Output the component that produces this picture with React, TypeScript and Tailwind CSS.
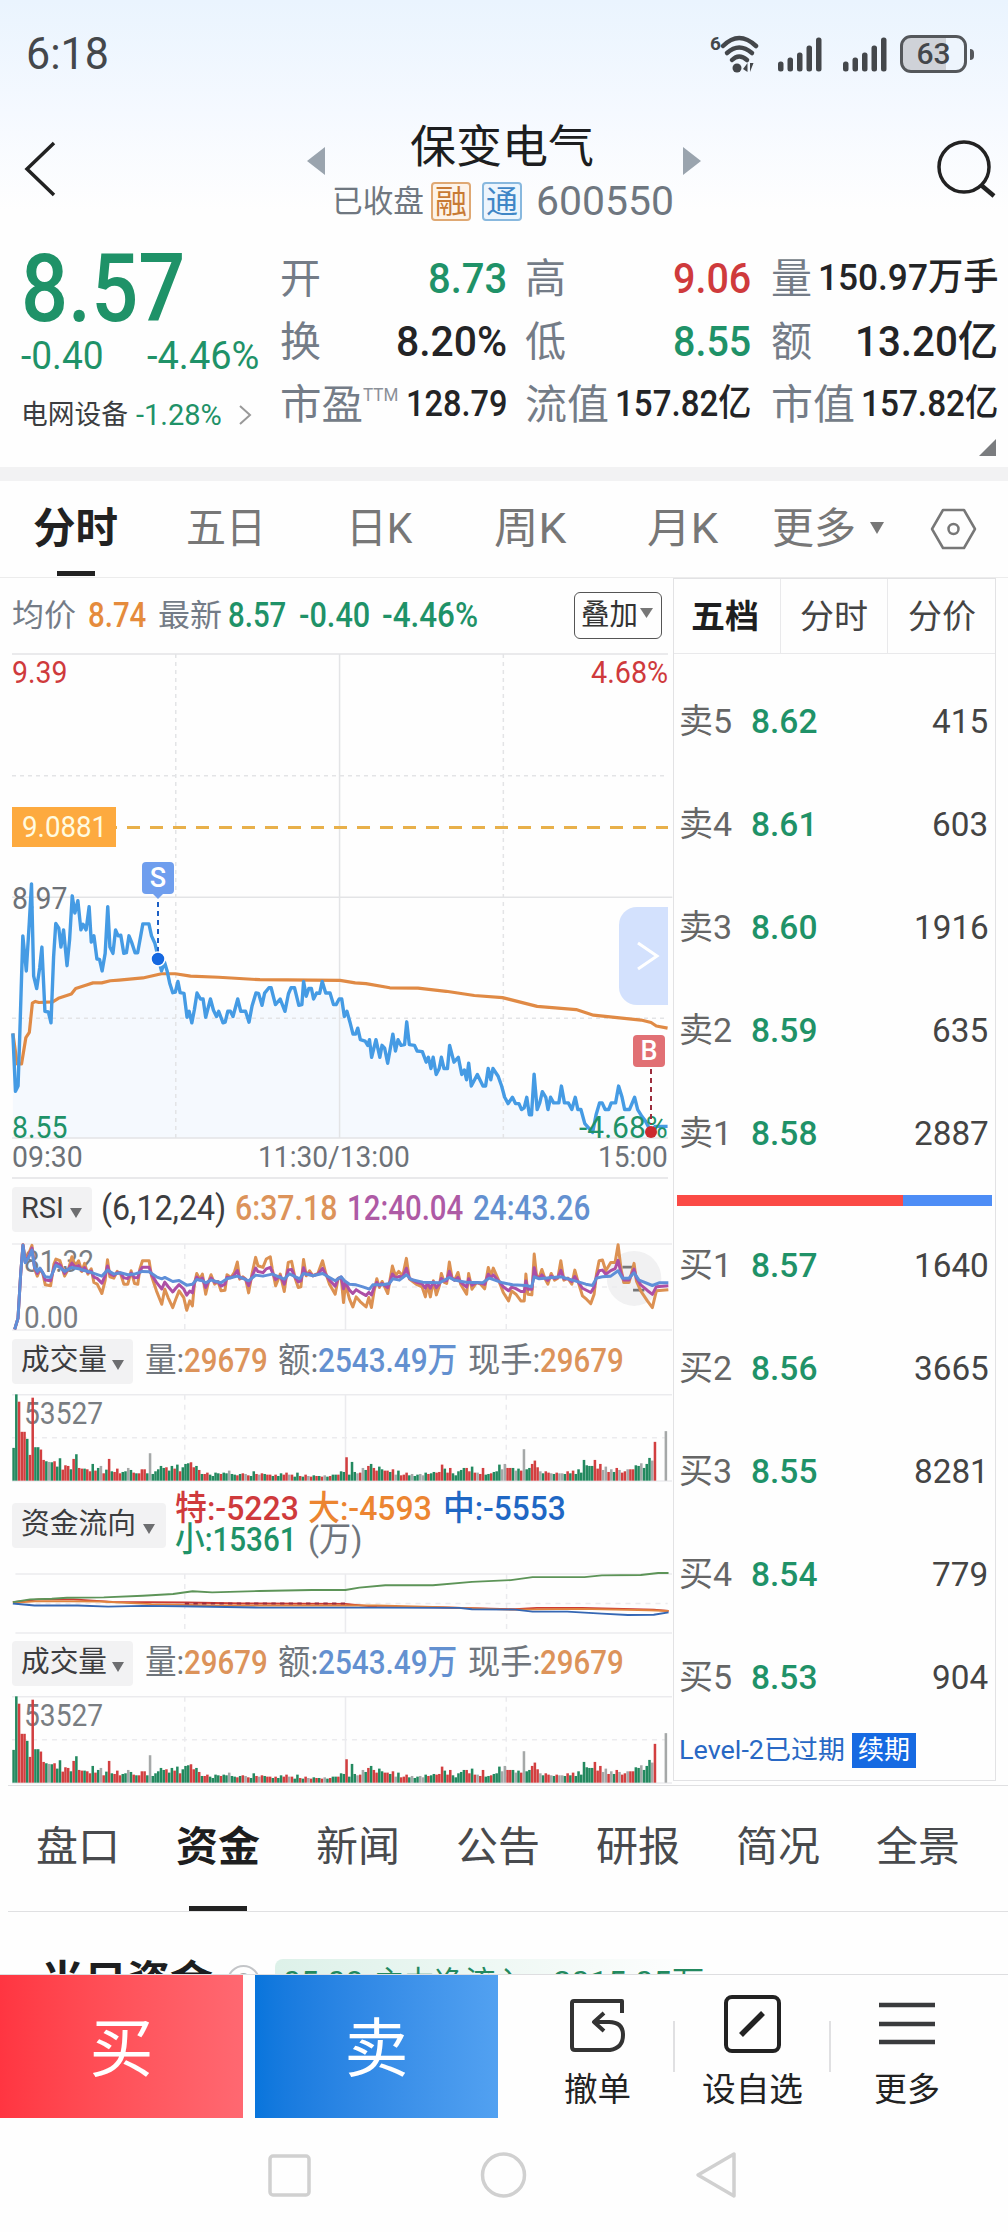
import { ReactNode, useLayoutEffect, useRef, useState } from "react";
import clsx from "clsx";

const GREEN = "text-[#1f9268]";
const RED = "text-[#cf3a3c]";

// Sets a piece of text to a fixed width by condensing or widening the glyphs.
function Fit({
  w,
  className,
  children,
}: {
  w: number;
  className?: string;
  children: ReactNode;
}) {
  const ref = useRef<HTMLSpanElement>(null);
  const [scale, setScale] = useState(1);

  useLayoutEffect(() => {
    if (ref.current) {
      setScale(w / ref.current.offsetWidth);
    }
  }, [w, children]);

  return (
    <span
      className={clsx("inline-block shrink-0 whitespace-nowrap", className)}
      style={{ width: w }}
    >
      <span
        ref={ref}
        className="inline-block origin-left"
        style={{ transform: `scaleX(${scale})` }}
      >
        {children}
      </span>
    </span>
  );
}

function Signal({ className }: { className?: string }) {
  return (
    <svg className={className} width="44" height="35" viewBox="0 0 44 35">
      {[10, 14, 19, 26, 34].map((h, i) => (
        <rect
          key={h}
          x={i * 9.5}
          y={34.5 - h}
          width="5.5"
          height={h}
          rx="2.5"
          fill="#44474b"
        />
      ))}
    </svg>
  );
}

function StatusBar() {
  return (
    <div className="flex h-[108px] items-center pl-[26px] text-[#44474b]">
      <Fit w={83} className="text-[44px]">
        6:18
      </Fit>
      <svg className="ml-[601px]" width="50" height="40" viewBox="0 0 50 40">
        <text x="0" y="16" fontSize="19" fontWeight="700" fill="#44474b">
          6
        </text>
        <g fill="none" stroke="#44474b" strokeWidth="4.5" strokeLinecap="round">
          <path d="M13 12 Q29 -4 46 12" />
          <path d="M17 19 Q29 8 42 19" />
          <path d="M22 26 Q29 19 37 26" />
        </g>
        <circle cx="27" cy="34" r="4.5" fill="#44474b" />
        <path d="M33 35 l4.500 -6 v9 z M40 29 h3.500 l-3.500 9 z" fill="#44474b" />
      </svg>
      <Signal className="ml-[18px]" />
      <Signal className="ml-[21px]" />
      <div className="ml-[13px] flex h-[38px] w-[67px] items-center justify-center rounded-[11px] border-[3px] border-[#54575b] bg-gradient-to-r from-[#cfd2d8] from-70% to-[#eef5fd] to-70%">
        <Fit w={34} className="text-[30px] leading-none font-medium">
          63
        </Fit>
      </div>
      <div className="ml-[3px] h-[11px] w-[4px] rounded-r bg-[#54575b]" />
    </div>
  );
}

function Header() {
  return (
    <div className="flex h-[122px] items-center">
      <svg className="ml-[24px]" width="32" height="56" viewBox="0 0 32 56">
        <path
          d="M30 2 L3 28 L30 54"
          fill="none"
          stroke="#222"
          strokeWidth="3.5"
        />
      </svg>
      <svg
        className="mb-[16px] ml-[251px]"
        width="18"
        height="28"
        viewBox="0 0 18 28"
      >
        <path d="M18 0 V28 L0 14 Z" fill="#9aa4ae" />
      </svg>
      <div className="ml-[7px] w-[343px] pt-[11px]">
        <div className="flex h-[54px] items-center justify-center text-[#1d1e20]">
          <Fit w={184} className="mr-[3px] text-[45px] leading-none">
            保变电气
          </Fit>
        </div>
        <div className="flex h-[54px] items-center text-[#6f7780]">
          <Fit w={92} className="text-[31px] leading-none">
            已收盘
          </Fit>
          <span className="ml-[7px] flex h-[39px] w-[40px] items-center justify-center rounded border-2 border-[#dfa873] bg-[#fdf3e9] text-[32px] leading-none text-[#c87a34]">
            融
          </span>
          <span className="ml-[11px] flex h-[39px] w-[40px] items-center justify-center rounded border-2 border-[#88b8de] bg-[#ecf5fd] text-[32px] leading-none text-[#3f86c6]">
            通
          </span>
          <Fit w={138} className="ml-[14px] text-[40px] leading-none">
            600550
          </Fit>
        </div>
      </div>
      <svg
        className="mb-[16px] ml-[8px]"
        width="18"
        height="28"
        viewBox="0 0 18 28"
      >
        <path d="M0 0 V28 L18 14 Z" fill="#9aa4ae" />
      </svg>
      <svg className="ml-[235px]" width="62" height="60" viewBox="0 0 62 60">
        <g fill="none" stroke="#222">
          <circle cx="28" cy="28" r="25" strokeWidth="3.5" />
          <path d="M45 46 L58 57" strokeWidth="4.500" />
        </g>
      </svg>
    </div>
  );
}

type Cell = {
  label: string;
  labelW: number;
  value: string;
  w: number;
  color?: string;
  small?: boolean;
  sup?: string;
};

const quoteCols: { className: string; cells: Cell[] }[] = [
  {
    className: "w-[227px]",
    cells: [
      { label: "开", labelW: 41, value: "8.73", w: 79, color: GREEN },
      { label: "换", labelW: 41, value: "8.20%", w: 111 },
      {
        label: "市盈",
        labelW: 83,
        sup: "TTM",
        value: "128.79",
        w: 101,
        small: true,
      },
    ],
  },
  {
    className: "ml-[18px] w-[226px]",
    cells: [
      { label: "高", labelW: 41, value: "9.06", w: 78, color: RED },
      { label: "低", labelW: 41, value: "8.55", w: 78, color: GREEN },
      { label: "流值", labelW: 84, value: "157.82亿", w: 136, small: true },
    ],
  },
  {
    className: "ml-[20px] w-[227px]",
    cells: [
      { label: "量", labelW: 41, value: "150.97万手", w: 180, small: true },
      { label: "额", labelW: 41, value: "13.20亿", w: 143 },
      { label: "市值", labelW: 84, value: "157.82亿", w: 137, small: true },
    ],
  },
];

function Quote() {
  return (
    <div className="h-[237px] pt-[17px]">
      <div className="flex h-[192px]">
        <div className={clsx("w-[260px] pl-[21px]", GREEN)}>
          <div className="flex h-[80px] items-center pt-[4px]">
            <Fit w={164} className="text-[94px] leading-none font-medium">
              8.57
            </Fit>
          </div>
          <div className="flex h-[58px] items-center text-[38px] leading-none">
            <Fit w={83}>-0.40</Fit>
            <Fit w={112} className="ml-[43px]">
              -4.46%
            </Fit>
          </div>
          <div className="flex h-[60px] items-center leading-none">
            <Fit w={107} className="text-[27px] text-[#3b3d40]">
              电网设备
            </Fit>
            <Fit w={86} className="ml-[8px] text-[29px]">
              -1.28%
            </Fit>
            <svg
              className="ml-[16px]"
              width="14"
              height="20"
              viewBox="0 0 14 20"
            >
              <path d="M2 1 L12 10 L2 19" fill="none" stroke="#999" strokeWidth="2" />
            </svg>
          </div>
        </div>
        <div className="flex pl-[20px]">
          {quoteCols.map((col, i) => (
            <div key={i} className={col.className}>
              {col.cells.map((c) => (
                <div
                  key={c.label}
                  className="flex h-[63px] items-center justify-between"
                >
                  <span className="flex pt-[2px] text-[41px] leading-none text-[#747c87]">
                    <Fit w={c.labelW}>{c.label}</Fit>
                    {c.sup && (
                      <Fit
                        w={35}
                        className="text-[19px] leading-none text-[#8b9098]"
                      >
                        {c.sup}
                      </Fit>
                    )}
                  </span>
                  <Fit
                    w={c.w}
                    className={clsx(
                      "leading-none font-medium",
                      c.small ? "mb-[2px] text-[37px]" : "text-[42px]",
                      c.color ?? "text-[#232426]",
                    )}
                  >
                    {c.value}
                  </Fit>
                </div>
              ))}
            </div>
          ))}
        </div>
      </div>
      <svg
        className="ml-[979px]"
        width="17"
        height="17"
        viewBox="0 0 17 17"
      >
        <path d="M17 0 V17 H0 Z" fill="#7a7c7f" />
      </svg>
    </div>
  );
}

const periods = [
  { name: "五日", w: 80, className: "ml-[68px]" },
  { name: "日K", w: 66, className: "ml-[80px]" },
  { name: "周K", w: 72, className: "ml-[82px]" },
  { name: "月K", w: 71, className: "ml-[81px]" },
  { name: "更多", w: 84, className: "ml-[54px]" },
];

function PeriodTabs() {
  return (
    <div className="flex h-[97px] border-b border-[#ececec] text-[42px] leading-none text-[#777]">
      <div className="ml-[33px] flex w-[85px] flex-col items-center">
        <span className="flex h-[90px] items-center pt-[5px] font-bold text-[#222]">
          <Fit w={85}>分时</Fit>
        </span>
        <span className="h-[5px] w-[38px] bg-[#222]" />
      </div>
      {periods.map((p) => (
        <span
          key={p.name}
          className={clsx("flex h-[90px] items-center pt-[5px]", p.className)}
        >
          <Fit w={p.w}>{p.name}</Fit>
        </span>
      ))}
      <svg
        className="mt-[41px] ml-[14px]"
        width="14"
        height="12"
        viewBox="0 0 14 12"
      >
        <path d="M0 0 H14 L7 12 Z" fill="#777" />
      </svg>
      <svg
        className="mt-[27px] ml-[46px]"
        width="47"
        height="42"
        viewBox="0 0 47 42"
      >
        <g fill="none" stroke="#777" strokeWidth="2.5">
          <path
            d="M13 2 H34 L45 21 L34 40 H13 L2 21 Z"
            strokeLinejoin="round"
          />
          <circle cx="23.5" cy="21" r="5" />
        </g>
      </svg>
    </div>
  );
}

const PRICE =
  "30,1118 36,1283 42,1268 46,1120 53,840 61,940 68,800 73,692 78,955 85,990 92,930 97,872 104,1055 112,1057 118,1088 124,900 129,805 136,818 141,872 147,823 155,925 161,850 167,726 173,775 180,740 187,823 192,807 199,823 206,757 211,858 217,840 224,906 230,907 236,940 243,890 249,757 254,872 261,890 267,823 273,840 279,838 286,890 292,888 298,840 304,858 312,888 318,888 330,806 344,806 350,840 358,862 366,905 373,940 380,915 386,940 392,975 399,1002 405,1000 411,970 416,1002 425,1004 432,1072 437,1055 443,1088 449,1050 455,1003 463,1020 469,1020 475,1072 486,1020 493,1052 500,1070 505,1055 515,1088 520,1086 526,1055 532,1055 538,1070 549,1020 556,1055 567,1055 575,1086 582,1040 591,1003 597,1004 605,1038 611,1003 621,988 626,988 636,1036 647,1020 658,1055 666,1005 672,988 680,988 690,1038 697,1036 701,970 707,1012 713,990 719,990 724,1020 731,1003 738,1004 744,970 752,1003 762,1003 770,1036 776,1036 783,1020 789,1020 795,1070 801,1055 808,1086 815,1120 821,1120 826,1103 832,1136 843,1140 849,1152 853,1136 858,1186 868,1136 877,1186 882,1152 888,1160 895,1203 907,1120 913,1168 919,1136 926,1152 934,1150 939,1085 945,1150 957,1152 963,1168 975,1170 984,1200 989,1186 995,1218 1000,1186 1007,1235 1014,1218 1019,1186 1025,1218 1033,1218 1038,1152 1048,1200 1058,1186 1066,1235 1072,1222 1077,1250 1082,1203 1088,1268 1102,1235 1115,1268 1121,1268 1127,1218 1133,1250 1138,1218 1150,1240 1158,1268 1165,1300 1173,1318 1183,1300 1190,1318 1198,1318 1204,1335 1210,1330 1216,1300 1222,1350 1227,1350 1233,1234 1240,1335 1246,1316 1252,1284 1260,1300 1265,1335 1271,1300 1278,1316 1290,1316 1296,1268 1303,1316 1312,1316 1320,1335 1328,1300 1334,1335 1341,1335 1350,1375 1368,1400 1376,1350 1384,1316 1390,1316 1397,1335 1405,1335 1411,1316 1421,1316 1428,1268 1436,1300 1442,1335 1453,1335 1465,1300 1472,1335 1482,1355 1490,1368 1503,1398 1512,1383 1541,1383";

const AVERAGE =
  "30,1118 40,1205 50,1205 60,1130 68,1115 75,1032 82,1027 90,1030 122,1028 135,1018 165,1006 175,990 200,980 215,974 235,974 255,968 275,966 330,960 373,948 405,948 440,955 505,958 600,965 785,967 820,974 845,976 900,988 965,989 1030,998 1095,1010 1160,1016 1240,1041 1330,1050 1370,1066 1430,1074 1480,1080 1503,1087 1515,1097 1541,1103";

function PriceChart() {
  return (
    <div className="relative h-[484px] w-[656px]">
      <svg
        className="block overflow-visible"
        width="656"
        height="484"
        viewBox="28 37 1514 1379"
        preserveAspectRatio="none"
      >
        <polygon points={`30,1416 ${PRICE} 1541,1416`} fill="#f3f8fe" opacity="0.85" />
        <g fill="none" strokeWidth="1.5" stroke="#e3e4e6">
          <path
            d="M28 37 H1542 M28 730 H1552 M28 1416 H1542 M784 37 V1416"
            vectorEffect="non-scaling-stroke"
          />
          <path
            d="M28 384 H1542 M28 1075 H1542 M406 37 V1416 M1162 37 V1416"
            strokeDasharray="4 4"
            vectorEffect="non-scaling-stroke"
          />
        </g>
        <path
          d="M268 531 H1542"
          stroke="#e8b04a"
          strokeWidth="3"
          strokeDasharray="13 10"
          strokeDashoffset="12"
          vectorEffect="non-scaling-stroke"
        />
      </svg>
      <div className="absolute inset-0 text-[31px] leading-none">
        <Fit w={55} className={clsx("absolute top-[3px] left-0", RED)}>
          9.39
        </Fit>
        <Fit w={77} className={clsx("absolute top-[3px] right-0", RED)}>
          4.68%
        </Fit>
        <Fit w={55} className="absolute top-[229px] left-0 text-[#6d7278]">
          8.97
        </Fit>
        <Fit w={55} className={clsx("absolute bottom-[-5px] left-0", GREEN)}>
          8.55
        </Fit>
        <div className="absolute top-[153px] left-0 flex h-[40px] w-[104px] items-center justify-center bg-[#fdaa3f] text-[#fffbe0]">
          <Fit w={85} className="text-[30px]">
            9.0881
          </Fit>
        </div>
      </div>
      <svg
        className="absolute inset-0 overflow-visible"
        width="656"
        height="484"
        viewBox="28 37 1514 1379"
        preserveAspectRatio="none"
      >
        <g fill="none" strokeLinejoin="round">
          <polyline
            points={AVERAGE}
            stroke="#e08a45"
            strokeWidth="3.2"
            vectorEffect="non-scaling-stroke"
          />
          <polyline
            points={PRICE}
            stroke="#459be4"
            strokeWidth="3.4"
            vectorEffect="non-scaling-stroke"
          />
        </g>
      </svg>
      <Fit
        w={89}
        className={clsx("absolute right-0 bottom-[-5px] text-[31px] leading-none", GREEN)}
      >
        -4.68%
      </Fit>
      <div className="absolute top-[208px] left-[130px] flex h-[32px] w-[32px] items-center justify-center rounded bg-[#6f9eee] text-[27px] leading-none font-medium text-white">
        S
      </div>
      <div className="absolute top-[381px] left-[621px] flex h-[32px] w-[32px] items-center justify-center rounded bg-[#e17074] text-[27px] leading-none font-medium text-white">
        B
      </div>
      <svg className="absolute inset-0 overflow-visible" width="656" height="484">
        <path d="M141 240 h10 l-5 5 z" fill="#6f9eee" />
        <path d="M146 248 V298" stroke="#1c5fc4" strokeWidth="2" strokeDasharray="5 4" />
        <circle cx="146" cy="305" r="7" fill="#1668e0" stroke="#fff" strokeWidth="1.5" />
        <path d="M639 415 V470" stroke="#9b2c3c" strokeWidth="2" strokeDasharray="5 4" />
        <circle cx="639" cy="478" r="6" fill="#cc2a2e" />
      </svg>
      <div className="absolute top-[253px] right-0 flex h-[98px] w-[49px] items-center justify-center rounded-l-[18px] bg-[#d3e1fd]">
        <svg className="ml-2" width="24" height="30" viewBox="0 0 24 30">
          <path d="M2 2 L21 15 L2 28" fill="none" stroke="#fff" strokeWidth="3" />
        </svg>
      </div>
    </div>
  );
}

function GridLines({ top, bottom }: { top: number; bottom: number }) {
  const middle = (top + bottom) / 2;
  return (
    <g fill="none" stroke="#ebebee" strokeWidth="1.5">
      <path
        d={`M36 ${top} H2019 M36 ${bottom} H2019 M1038 ${top} V${bottom}`}
        vectorEffect="non-scaling-stroke"
      />
      <path
        d={`M36 ${middle} H2009 M555 ${top} V${bottom} M1521 ${top} V${bottom}`}
        strokeDasharray="5 5"
        vectorEffect="non-scaling-stroke"
      />
    </g>
  );
}

const RSI6 = [
  44, 265, 54, 232, 62, 100, 69, 12, 76, 62, 86, 40, 96, 14, 104, 85, 112, 106,
  120, 86, 128, 96, 136, 132, 152, 135, 162, 70, 168, 55, 180, 60, 188, 85, 194,
  106, 206, 84, 216, 48, 226, 75, 236, 60, 246, 92, 254, 68, 264, 100, 274, 84,
  282, 125, 292, 130, 306, 158, 316, 118, 323, 57, 330, 108, 342, 112, 352, 92,
  362, 98, 372, 130, 384, 130, 394, 90, 404, 128, 414, 130, 420, 85, 428, 60,
  448, 60, 455, 105, 470, 150, 486, 190, 495, 145, 505, 170, 519, 200, 528, 175,
  538, 150, 552, 170, 561, 208, 570, 180, 578, 195, 584, 130, 591, 98, 600, 115,
  608, 100, 618, 160, 626, 125, 634, 102, 645, 130, 655, 122, 664, 150, 676,
  148, 682, 102, 694, 110, 704, 95, 713, 64, 720, 115, 730, 108, 738, 115, 747,
  156, 757, 100, 768, 50, 775, 75, 790, 80, 800, 55, 812, 48, 818, 85, 828, 135,
  842, 100, 854, 152, 866, 65, 876, 62, 886, 110, 896, 140, 904, 138, 912, 56,
  920, 105, 930, 90, 940, 105, 955, 98, 969, 60, 978, 95, 990, 130, 1007, 160,
  1016, 112, 1025, 110, 1032, 185, 1038, 130, 1050, 175, 1060, 198, 1070, 168,
  1082, 182, 1100, 198, 1108, 170, 1116, 200, 1124, 150, 1132, 114, 1140, 140,
  1148, 122, 1165, 158, 1172, 115, 1179, 76, 1188, 105, 1198, 92, 1210, 105,
  1221, 53, 1230, 115, 1250, 130, 1268, 138, 1278, 168, 1284, 130, 1293, 168,
  1302, 120, 1311, 162, 1320, 135, 1326, 98, 1335, 125, 1342, 128, 1350, 64,
  1358, 110, 1366, 118, 1376, 95, 1384, 130, 1402, 160, 1408, 98, 1418, 145,
  1432, 125, 1444, 130, 1456, 144, 1467, 80, 1475, 105, 1482, 82, 1498, 118,
  1512, 155, 1528, 180, 1537, 150, 1550, 160, 1565, 180, 1575, 180, 1580, 100,
  1586, 160, 1598, 162, 1605, 40, 1612, 105, 1620, 110, 1628, 86, 1638, 115,
  1646, 130, 1656, 98, 1666, 118, 1676, 112, 1685, 60, 1694, 118, 1706, 112,
  1718, 130, 1727, 88, 1736, 120, 1750, 165, 1762, 175, 1775, 188, 1785, 160,
  1792, 100, 1800, 60, 1810, 58, 1820, 90, 1835, 65, 1848, 65, 1857, 12, 1866,
  85, 1874, 125, 1890, 125, 1898, 95, 1905, 68, 1912, 120, 1925, 150, 1945, 180,
  1960, 200, 1972, 150, 2008, 147,
];

const RSI24 = [
  44, 265, 54, 232, 62, 100, 69, 14, 76, 66, 86, 50, 96, 28, 104, 80, 112, 92,
  120, 82, 136, 108, 152, 110, 168, 74, 180, 80, 194, 92, 216, 80, 236, 84, 264,
  92, 306, 106, 323, 88, 342, 100, 362, 96, 384, 102, 404, 100, 428, 92, 448,
  93, 470, 108, 486, 114, 495, 110, 519, 122, 538, 119, 561, 133, 578, 130, 591,
  116, 608, 120, 618, 126, 634, 118, 664, 126, 682, 114, 713, 106, 747, 120,
  768, 103, 790, 106, 818, 100, 854, 115, 870, 99, 900, 114, 912, 98, 940, 105,
  969, 98, 990, 110, 1007, 120, 1025, 108, 1035, 120, 1050, 130, 1070, 132,
  1090, 138, 1110, 145, 1120, 132, 1150, 132, 1170, 128, 1180, 114, 1200, 118,
  1221, 102, 1235, 116, 1270, 124, 1320, 126, 1350, 110, 1365, 118, 1400, 124,
  1450, 126, 1470, 112, 1510, 126, 1540, 132, 1580, 134, 1597, 138, 1605, 108,
  1620, 114, 1685, 108, 1720, 118, 1760, 130, 1780, 134, 1792, 112, 1810, 108,
  1835, 106, 1857, 90, 1870, 112, 1890, 112, 1905, 96, 1920, 118, 1960, 134,
  1980, 126, 2008, 126,
];

function valueAt(line: number[], x: number) {
  for (let i = 2; i < line.length; i += 2) {
    if (x <= line[i]) {
      const t = (x - line[i - 2]) / (line[i] - line[i - 2]);
      return line[i - 1] + t * (line[i + 1] - line[i - 1]);
    }
  }
  return line[line.length - 1];
}

// the middle line runs between the fast and the slow one
const RSI12 = RSI6.map((v, i) =>
  i % 2 === 0 ? v : v * 0.4 + valueAt(RSI24, RSI6[i - 1]) * 0.6,
);

function RsiChart() {
  return (
    <div className="relative h-[86px] w-[660px]">
      <div className="absolute inset-0 pl-[12px] text-[31px] leading-none text-[#797d82]">
        <Fit w={70} className="absolute top-[2px]">
          81.32
        </Fit>
        <Fit w={54} className="absolute top-[58px]">
          0.00
        </Fit>
      </div>
      <svg
        className="absolute inset-0 overflow-visible"
        width="660"
        height="86"
        viewBox="36 10 1983 257"
        preserveAspectRatio="none"
      >
        <circle cx="1905" cy="113" r="82" fill="#f1f1f2" />
        <GridLines top={10} bottom={267} />
        <path d="M1870 79 H1900 M1902 148 H1936" stroke="#777" strokeWidth="8" />
        <g fill="none" strokeWidth="9" strokeLinejoin="round">
          <polyline points={RSI6.join(" ")} stroke="#dc9152" />
          <polyline points={RSI12.join(" ")} stroke="#ad4fa5" />
          <polyline points={RSI24.join(" ")} stroke="#5f8fd8" />
        </g>
      </svg>
    </div>
  );
}

// one entry a minute: height and colour (r = up, g = down, n = unchanged)
const VOLUME =
  "98g 258g 236r 146r 146r 125g 77r 248r 100g 100g 93r 62r 58g 56n 55g 58r 42g 67g 33r 46r 44r 34g 65r 79g 38r 36r 36g 34r 28r 50g 30r 38g 44n 22r 33g 65r 28g 26r 36r 22r 26g 28g 38n 32g 24r 22g 22r 34r 34r 22g 82n 20g 28g 34g 44g 38g 40r 30g 44g 36r 48g 28r 40g 50g 52g 55r 40r 44g 32r 20g 20r 24r 18g 14g 24g 22g 20r 24g 22g 30n 20g 18g 16r 20g 22r 20n 16r 14g 28g 20r 18n 22r 20g 18r 18r 14g 18r 14g 22g 18r 24r 18n 18r 12g 24g 14r 12g 18r 14n 12r 16g 14r 14g 12r 16n 12g 14r 18g 18g 18r 28g 26g 70r 18g 56g 26g 22n 24r 38n 32g 44r 50g 38r 30r 42g 34g 30r 30r 26g 34r 18n 30g 16r 18r 24r 16g 20n 14g 18g 20n 16n 24g 20r 22g 26g 24r 26r 48r 36g 24r 38r 22g 16g 28g 32g 38g 38r 28r 42g 24r 24n 20r 38r 18g 20g 22r 26g 28g 48g 34n 50n 38r 38r 38g 30n 36g 30r 94n 34g 38g 50r 60r 40r 28n 22g 28r 24r 22n 20g 24r 22n 22n 20g 28r 22g 30r 20g 34g 24g 62g 46g 44g 44g 62r 36r 50r 32n 42n 26r 34n 26g 38r 32n 24r 28r 34n 34r 34r 46g 44g 52n 38g 50g 68g 60n 116r 0n 0n 0n 148n".split(
    " ",
  );

const volumeColors: Record<string, string> = {
  r: "#d23f40",
  g: "#23895f",
  n: "#a5a8a8",
};

function VolumeChart() {
  return (
    <div className="relative h-[87px] w-[660px]">
      <Fit
        w={79}
        className="absolute top-[4px] left-[12px] text-[31px] leading-none text-[#797d82]"
      >
        53527
      </Fit>
      <svg
        className="absolute inset-0 overflow-visible"
        width="660"
        height="87"
        viewBox="36 460 1983 260"
        preserveAspectRatio="none"
      >
        <GridLines top={462} bottom={720} />
        {VOLUME.map((bar, i) => {
          const h = parseInt(bar);
          return (
            <rect
              key={i}
              x={37 + i * 8.2}
              y={719 - h}
              width="7.6"
              height={h}
              fill={volumeColors[bar.slice(-1)]}
            />
          );
        })}
      </svg>
    </div>
  );
}

function FlowChart() {
  return (
    <svg
      className="block overflow-visible"
      width="660"
      height="60"
      viewBox="28 276 1524 177"
      preserveAspectRatio="none"
    >
      <g fill="none" stroke="#ebebee" strokeWidth="1.5">
        <path
          d="M36 279 H1552 M36 453 H1552 M798 279 V453"
          vectorEffect="non-scaling-stroke"
        />
        <path
          d="M36 366 H1542 M427 279 V453 M1170 279 V453"
          strokeDasharray="5 5"
          vectorEffect="non-scaling-stroke"
        />
      </g>
      <g fill="none" strokeWidth="5.500">
        <path
          d="M30 362 L90 354 L170 354 L260 361 L430 363 L560 366 L798 367 L870 376 L1000 377 L1190 383 L1240 379 L1345 379 L1510 384 L1544 388"
          stroke="#cc3a33"
        />
        <path
          d="M30 364 L90 359 L230 360 L350 368 L500 372 L700 372 L870 372 L1000 376 L1180 384 L1340 382 L1500 386 L1544 388"
          stroke="#e0833f"
        />
        <path
          d="M30 366 L80 372 L180 372 L250 375 L330 373 L420 374 L600 378 L870 378 L1060 379 L1090 383 L1190 384 L1230 390 L1310 390 L1390 396 L1450 400 L1510 399 L1544 392"
          stroke="#3567b4"
        />
        <path d="M427 366 H798" stroke="#9c2a3c" strokeDasharray="10 10" />
        <path
          d="M30 362 L70 354 L120 352 L155 349 L240 348 L330 343 L400 338 L445 330 L490 333 L600 329 L720 326 L798 326 L830 319 L890 312 L1000 312 L1090 302 L1180 297 L1230 288 L1350 288 L1390 283 L1480 282 L1520 276 L1544 276"
          stroke="#5d9458"
        />
      </g>
    </svg>
  );
}

function Pill({
  text,
  w,
  className,
}: {
  text: string;
  w: number;
  className: string;
}) {
  return (
    <span
      className={clsx(
        "flex h-[45px] shrink-0 items-center rounded bg-[#f2f2f3] pb-[2px] pl-[9px] text-[29px] leading-none text-[#3c3d40]",
        className,
      )}
    >
      <Fit w={w}>{text}</Fit>
      <svg className="mt-2 ml-auto" width="12" height="10" viewBox="0 0 12 10">
        <path d="M0 0 H12 L6 10 Z" fill="#6d6e70" />
      </svg>
    </span>
  );
}

function VolumeHeader() {
  return (
    <div className="flex h-[45px] items-center text-[34px] leading-none text-[#6f757c]">
      <Pill text="成交量" w={86} className="w-[121px] pr-[9px]" />
      <div className="flex pb-[4px]">
        <Fit w={39} className="ml-[12px]">
          量:
        </Fit>
        <Fit w={84} className="font-medium text-[#dc935a]">
          29679
        </Fit>
        <Fit w={40} className="ml-[10px]">
          额:
        </Fit>
        <Fit w={139} className="font-medium text-[#6390d0]">
          2543.49万
        </Fit>
        <Fit w={72} className="ml-[11px]">
          现手:
        </Fit>
        <Fit w={84} className="font-medium text-[#dc935a]">
          29679
        </Fit>
      </div>
    </div>
  );
}

function ChartColumn() {
  return (
    <div className="w-[673px] pl-[12px] leading-none">
      <div className="flex h-[76px] items-center pb-[2px] text-[35px]">
        <Fit w={64} className="text-[31px] text-[#747c87]">
          均价
        </Fit>
        <Fit w={58} className="ml-[12px] font-medium text-[#e58b3c]">
          8.74
        </Fit>
        <Fit w={64} className="ml-[12px] text-[31px] text-[#747c87]">
          最新
        </Fit>
        <span className={clsx("flex font-medium", GREEN)}>
          <Fit w={58} className="ml-[6px]">
            8.57
          </Fit>
          <Fit w={71} className="ml-[13px]">
            -0.40
          </Fit>
          <Fit w={96} className="ml-[12px]">
            -4.46%
          </Fit>
        </span>
        <span className="mr-[11px] ml-auto flex h-[47px] w-[88px] items-center rounded-md border-[1.5px] border-[#555] pl-[6px] text-[#333]">
          <Fit w={57} className="text-[29px]">
            叠加
          </Fit>
          <svg
            className="mb-1 ml-[2px]"
            width="13"
            height="10"
            viewBox="0 0 13 10"
          >
            <path d="M0 0 H13 L6.500 10 Z" fill="#777" />
          </svg>
        </span>
      </div>
      <PriceChart />
      <div className="flex h-[41px] w-[656px] items-center justify-between border-b-2 border-[#e9e9eb] pb-[2px] text-[30px] text-[#6d7278]">
        <Fit w={71}>09:30</Fit>
        <Fit w={152} className="mr-[14px]">
          11:30/13:00
        </Fit>
        <Fit w={70}>15:00</Fit>
      </div>
      <div className="mt-[8px] flex h-[45px] items-center text-[35px] font-medium">
        <Pill text="RSI" w={43} className="w-[80px] pr-[10px] font-normal" />
        <div className="flex pb-[2px]">
          <Fit w={125} className="ml-[9px] font-normal text-[#3c3d40]">
            (6,12,24)
          </Fit>
          <Fit w={102} className="ml-[9px] text-[#dc935a]">
            6:37.18
          </Fit>
          <Fit w={116} className="ml-[10px] text-[#ae5aa5]">
            12:40.04
          </Fit>
          <Fit w={117} className="ml-[10px] text-[#6390d0]">
            24:43.26
          </Fit>
        </div>
      </div>
      <div className="pt-[12px]">
        <RsiChart />
      </div>
      <div className="pt-[9px]">
        <VolumeHeader />
      </div>
      <div className="pt-[10px]">
        <VolumeChart />
      </div>
      <div className="flex h-[92px] items-start text-[34px]">
        <Pill text="资金流向" w={115} className="mt-[22px] w-[154px] pr-[11px]" />
        <div className="ml-[9px] pt-[12px] leading-[31px] font-medium">
          <div className="flex h-[31px] items-center">
            <Fit w={124} className={RED}>
              特:-5223
            </Fit>
            <Fit w={124} className="ml-[9px] text-[#ec8531]">
              大:-4593
            </Fit>
            <Fit w={123} className="ml-[11px] text-[#1f67c4]">
              中:-5553
            </Fit>
          </div>
          <div className="flex h-[31px] items-center">
            <Fit w={122} className={GREEN}>
              小:15361
            </Fit>
            <Fit w={54} className="ml-[11px] font-normal text-[#6f757c]">
              (万)
            </Fit>
          </div>
        </div>
      </div>
      <FlowChart />
      <div className="pt-[8px]">
        <VolumeHeader />
      </div>
      <div className="pt-[10px]">
        <VolumeChart />
      </div>
    </div>
  );
}

const asks = [
  ["卖5", "8.62", "415"],
  ["卖4", "8.61", "603"],
  ["卖3", "8.60", "1916"],
  ["卖2", "8.59", "635"],
  ["卖1", "8.58", "2887"],
];

const bids = [
  ["买1", "8.57", "1640"],
  ["买2", "8.56", "3665"],
  ["买3", "8.55", "8281"],
  ["买4", "8.54", "779"],
  ["买5", "8.53", "904"],
];

function Level({ row }: { row: string[] }) {
  const [name, price, volume] = row;
  return (
    <div className="flex h-[103px] items-center pr-[7px] pb-[2px] pl-[5px] text-[34px] leading-none">
      <Fit w={53} className="text-[#666]">
        {name}
      </Fit>
      <Fit w={66} className={clsx("ml-[19px] font-medium", GREEN)}>
        {price}
      </Fit>
      <Fit w={volume.length * 18.6} className="ml-auto text-[#444]">
        {volume}
      </Fit>
    </div>
  );
}

function OrderBook() {
  return (
    <div className="h-[1203px] w-[323px] border border-[#e2e2e4]">
      <div className="flex h-[75px] border-b border-[#e9e9eb] text-[33px] leading-none text-[#444]">
        <span className="flex w-[107px] items-center justify-center border-r border-[#e9e9eb] pr-1 font-bold text-[#1d1e20]">
          <Fit w={68}>五档</Fit>
        </span>
        <span className="flex w-[107px] items-center justify-center border-r border-[#e9e9eb]">
          <Fit w={68}>分时</Fit>
        </span>
        <span className="flex flex-1 items-center justify-center">
          <Fit w={68}>分价</Fit>
        </span>
      </div>
      <div className="pt-[16px]">
        {asks.map((row) => (
          <Level key={row[0]} row={row} />
        ))}
      </div>
      <div className="mx-[3px] mt-[10px] flex h-[11px] bg-[#4d8df6]">
        <div className="w-[226px] bg-[#fb4a45]" />
      </div>
      <div className="pt-[8px]">
        {bids.map((row) => (
          <Level key={row[0]} row={row} />
        ))}
      </div>
      <div className="mt-[1px] flex h-[40px] items-center pl-[5px] text-[26px] leading-none text-[#2868c4]">
        <Fit w={166}>Level-2已过期</Fit>
        <span className="ml-[7px] flex h-[35px] w-[64px] items-center justify-center bg-[#166ae2] text-white">
          <Fit w={52}>续期</Fit>
        </span>
      </div>
    </div>
  );
}

const sections = ["盘口", "资金", "新闻", "公告", "研报", "简况", "全景"];

function SectionTabs() {
  return (
    <div className="ml-[8px] flex h-[127px] border-y border-[#e0e0e2] text-[41px] leading-none text-[#484a4d]">
      {sections.map((name) => (
        <div
          key={name}
          className={clsx(
            "flex w-[140px] flex-col items-center justify-between",
            name === "资金" && "font-bold text-[#1d1e20]",
          )}
        >
          <span className="flex h-[120px] items-center pt-[2px]">
            <Fit w={84}>{name}</Fit>
          </span>
          {name === "资金" && <span className="h-[5px] w-[58px] bg-[#222]" />}
        </div>
      ))}
    </div>
  );
}

function FundsPeek() {
  return (
    <div className="flex h-[62px] items-start overflow-hidden pt-[47px] leading-none">
      <Fit w={172} className="mt-[2px] ml-[41px] text-[42px] font-bold text-[#1d1e20]">
        当日资金
      </Fit>
      <span className="mt-[6px] ml-[14px] flex size-[33px] shrink-0 items-center justify-center rounded-full border-2 border-[#c3c5c8] text-[24px] text-[#aaa]">
        ?
      </span>
      <div className="ml-[15px] flex h-[52px] w-[470px] items-start rounded-l-lg bg-gradient-to-r from-[#ddf1e9] to-[#fefefe] to-90% pt-[8px] pl-[7px] text-[31px] text-[#23895f]">
        <Fit w={80} className="ml-[1px]">
          05-08
        </Fit>
        <Fit w={152} className="ml-[11px]">
          主力净流入
        </Fit>
        <Fit w={160} className="ml-[18px]">
          -2015.05万
        </Fit>
      </div>
    </div>
  );
}

function Action({
  label,
  w,
  className,
  children,
}: {
  label: string;
  w: number;
  className: string;
  children: ReactNode;
}) {
  return (
    <div className={clsx("flex flex-col items-center pt-[18px]", className)}>
      <svg width="60" height="62" viewBox="0 0 60 62" fill="none">
        {children}
      </svg>
      <Fit w={w} className="mt-[18px] text-[33px] leading-none text-[#222]">
        {label}
      </Fit>
    </div>
  );
}

function BottomBar() {
  return (
    <div className="flex h-[144px] border-t border-[#dedee0] leading-none">
      <button className="w-[243px] bg-gradient-to-r from-[#ff3541] to-[#ff6871] pt-[6px] text-[64px] text-white">
        买
      </button>
      <button className="ml-[12px] w-[243px] bg-gradient-to-r from-[#0875dc] to-[#52a1f1] pt-[6px] text-[64px] text-white">
        卖
      </button>
      <Action label="撤单" w={67} className="ml-[47px] w-[104px]">
        <path
          d="M55 20 V8 H7 Q5 8 5 10 V54 Q5 57 8 57 H43 Q56 55 56 42 Q56 29 42 29 H28 M37 20 L27 29 L37 38"
          stroke="#333"
          strokeWidth="4"
          strokeLinejoin="round"
        />
      </Action>
      <div className="mt-[46px] ml-[24px] h-[51px] w-[2px] bg-[#e0e0e2]" />
      <Action label="设自选" w={101} className="ml-[25px] w-[104px]">
        <rect x="4" y="4" width="53" height="54" rx="6" stroke="#222" strokeWidth="4" />
        <path d="M19 42 L41 20" stroke="#222" strokeWidth="5.500" />
      </Action>
      <div className="mt-[46px] ml-[25px] h-[51px] w-[2px] bg-[#e0e0e2]" />
      <Action label="更多" w={66} className="ml-[24px] w-[104px]">
        <path
          d="M2 12 H58 M2 31 H58 M2 49 H58"
          stroke="#3a3b3d"
          strokeWidth="4.500"
        />
      </Action>
    </div>
  );
}

function NavBar() {
  return (
    <svg className="block" width="1008" height="114" viewBox="0 0 1008 114">
      <g fill="none" stroke="#d0d0d0" strokeWidth="3.5" strokeLinejoin="round">
        <rect x="270" y="38" width="39" height="39" rx="3" />
        <circle cx="503.5" cy="57" r="21" />
        <path d="M734 36 V78 L698 57 Z" />
      </g>
    </svg>
  );
}

export default function App() {
  return (
    <div className="h-[2232px] w-[1008px] overflow-hidden bg-[#fefefe] font-['Roboto','Noto_Sans_CJK_SC',sans-serif]">
      <div className="bg-gradient-to-b from-[#eaf4fe] via-[#f5f9ff] via-[24%] to-[#fefefe] to-[45%]">
        <StatusBar />
        <Header />
        <Quote />
      </div>
      <div className="h-[14px] bg-[#f2f2f3]" />
      <PeriodTabs />
      <div className="flex h-[1207px]">
        <ChartColumn />
        <OrderBook />
      </div>
      <SectionTabs />
      <FundsPeek />
      <BottomBar />
      <NavBar />
    </div>
  );
}
